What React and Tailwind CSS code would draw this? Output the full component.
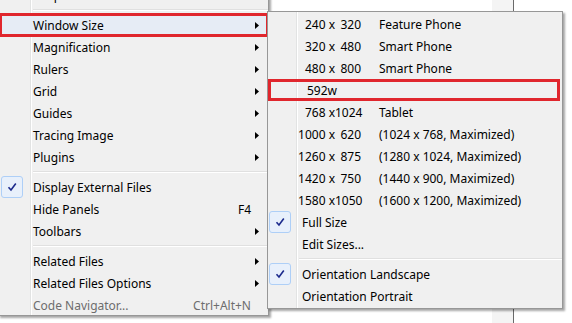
const font = { fontFamily: '"Noto Sans", "Liberation Sans", sans-serif' };

function Arrow() {
  return (
    <svg width="4" height="7" viewBox="0 0 4 7" className="block">
      <path d="M0 0 L4 3.5 L0 7 Z" fill="#000" />
    </svg>
  );
}

function Check() {
  return (
    <div className="w-[22px] h-[22px] rounded-[3px] border border-[#aecff7] bg-[#e8f0fb] flex items-center justify-center">
      <svg width="10" height="10" viewBox="0 0 10 10">
        <path d="M1.5 5.2 L4 8 L8.8 1.5" fill="none" stroke="#1c2a8c" strokeWidth="1.6" />
      </svg>
    </div>
  );
}

function Sep({ left }) {
  return (
    <div className="h-[8px] flex items-center">
      <div className={left} />
      <div className="flex-1 border-t border-[#e0e0e0] border-b border-b-white" />
    </div>
  );
}

function MainItem({ label, arrow, shortcut, checked, disabled, hot }) {
  const tone = disabled ? 'text-[#6d6d6d]' : 'text-black';
  return (
    <div className={`relative h-[22px] flex items-center ${hot ? 'bg-[#e6ecf5]' : ''}`}>
      <div className="w-[32px] pl-[2px] flex items-center">{checked && <Check />}</div>
      <div className={`flex-1 pl-[2px] pt-[2px] text-[12px] ${tone}`}>{label}</div>
      {shortcut && <div className={`text-[12px] pt-[2px] pr-[17px] ${tone}`}>{shortcut}</div>}
      {arrow && <div className="w-[4px] mr-[9px]"><Arrow /></div>}
      {hot && <div className="absolute left-0 right-[-1px] top-[-1px] bottom-[-1px] border-[3px] border-[#e0262d]" />}
    </div>
  );
}

function SizeItem({ a, b, label, custom, pad = 'pl-[6px]', checked, hot }) {
  return (
    <div className="relative h-[22px] flex items-center text-[12px] text-black">
      <div className="w-[28px] pl-[1px] flex items-center">{checked && <Check />}</div>
      {custom ? (
        <div className={`${pad} pt-[2px]`}>{custom}</div>
      ) : (
        <>
          <div className="w-[39px] pt-[2px] text-right">{a} x</div>
          <div className="w-[26px] pt-[2px] text-right">{b}</div>
          <div className="pl-[18px] pt-[2px]">{label}</div>
        </>
      )}
      {hot && <div className="absolute left-0 right-[2px] top-0 bottom-0 border-[3px] border-[#e0262d]" />}
    </div>
  );
}

export default function App() {
  return (
    <div className="relative w-[572px] h-[323px] bg-white overflow-hidden" style={font}>
      <div className="absolute left-[492px] top-0 w-[21px] h-[323px] bg-[#f4f4f4]" />
      <div className="absolute left-[513px] top-0 w-[1px] h-[323px] bg-[#6a6a6a]" />

      {/* main menu */}
      <div className="absolute left-[-2px] top-[-17px] w-[271px] h-[333px] bg-[#f0f0f0] border border-[#979797] shadow-[2px_2px_2px_rgba(0,0,0,0.35)]">
        <div className="absolute left-[31px] top-0 bottom-0 border-l border-[#e2e3e3] border-r border-r-white" />
        <div className="relative">
          <MainItem label="Snap To" />
          <Sep left="w-[34px]" />
          <MainItem label="Window Size" arrow hot />
          <MainItem label="Magnification" arrow />
          <MainItem label="Rulers" arrow />
          <MainItem label="Grid" arrow />
          <MainItem label="Guides" arrow />
          <MainItem label="Tracing Image" arrow />
          <MainItem label="Plugins" arrow />
          <Sep left="w-[34px]" />
          <MainItem label="Display External Files" checked />
          <MainItem label="Hide Panels" shortcut="F4" />
          <MainItem label="Toolbars" arrow />
          <Sep left="w-[34px]" />
          <MainItem label="Related Files" arrow />
          <MainItem label="Related Files Options" arrow />
          <MainItem label="Code Navigator..." shortcut="Ctrl+Alt+N" disabled />
        </div>
      </div>

      {/* submenu */}
      <div className="absolute left-[267px] top-[11px] w-[296px] h-[298px] bg-[#f0f0f0] border border-[#979797] shadow-[2px_2px_2px_rgba(0,0,0,0.35)] pt-[1px]">
        <div className="absolute left-[28px] top-0 bottom-0 border-l border-[#e2e3e3] border-r border-r-white" />
        <div className="relative">
          <SizeItem a="240" b="320" label="Feature Phone" />
          <SizeItem a="320" b="480" label="Smart Phone" />
          <SizeItem a="480" b="800" label="Smart Phone" />
          <SizeItem custom="592w" pad="pl-[11px]" hot />
          <SizeItem a="768" b="1024" label="Tablet" />
          <SizeItem a="1000" b="620" label="(1024 x 768, Maximized)" />
          <SizeItem a="1260" b="875" label="(1280 x 1024, Maximized)" />
          <SizeItem a="1420" b="750" label="(1440 x 900, Maximized)" />
          <SizeItem a="1580" b="1050" label="(1600 x 1200, Maximized)" />
          <SizeItem custom="Full Size" checked />
          <SizeItem custom="Edit Sizes..." />
          <Sep left="w-[31px]" />
          <SizeItem custom="Orientation Landscape" checked />
          <SizeItem custom="Orientation Portrait" />
        </div>
      </div>
    </div>
  );
}
